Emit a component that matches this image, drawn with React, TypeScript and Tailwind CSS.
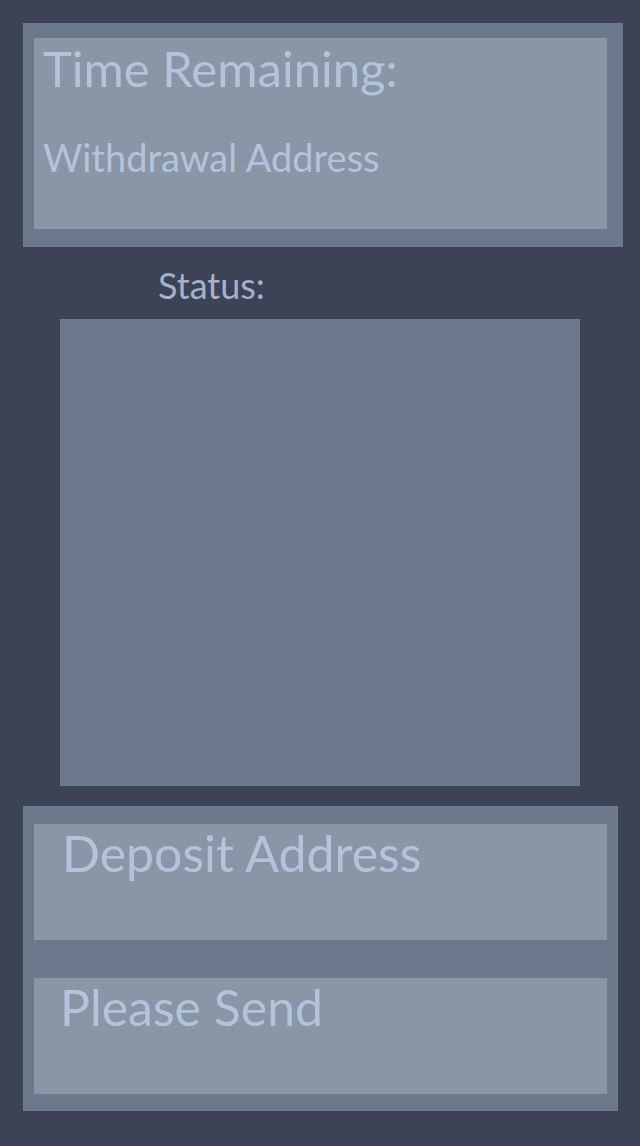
export default function App() {
  return (
    <div className="h-[1146px] w-[640px] overflow-hidden bg-[#3d4356] font-['Lato','Noto_Sans',sans-serif] text-[#b3c3dc]">
      {/* withdrawal panel */}
      <div className="ml-[23px] mt-[23px] w-[600px] bg-[#6c788b] pb-[18px] pl-[11px] pt-[15px]">
        <div className="h-[191px] w-[573px] bg-[#8a96a6] pl-[9px]">
          <div className="pt-[2px] text-[49px] leading-[56px]">Time Remaining:</div>
          <div className="mt-[38px] text-[38px] leading-[46px]">Withdrawal Address</div>
        </div>
      </div>

      <div className="h-[72px] pl-[158px] pt-[16px] text-[36px] leading-[44px] text-[#a4b1c6]">Status:</div>

      <div className="ml-[60px] h-[467px] w-[520px] bg-[#6c788b]" />

      {/* deposit panel */}
      <div className="ml-[23px] mt-[20px] flex h-[305px] w-[595px] flex-col gap-[38px] bg-[#6c788b] pl-[11px] pt-[18px]">
        <div className="h-[116px] w-[573px] bg-[#8a96a6] pl-[28px]">
          <div className="text-[50px] leading-[58px]">Deposit Address</div>
        </div>
        <div className="h-[116px] w-[573px] bg-[#8a96a6] pl-[26px]">
          <div className="text-[50px] leading-[58px]">Please Send</div>
        </div>
      </div>
    </div>
  )
}
